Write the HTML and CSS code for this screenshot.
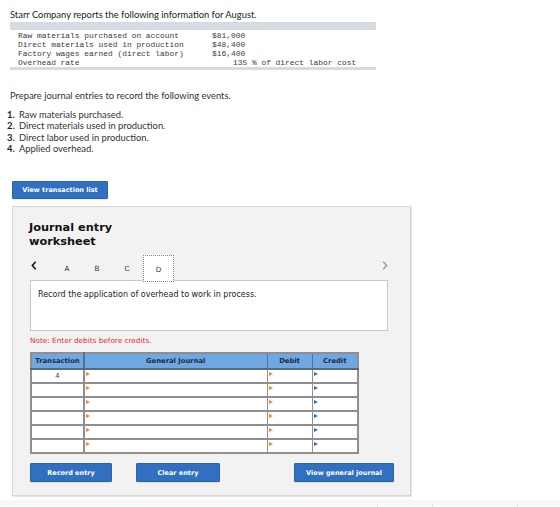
FILE: index.html
```html
<!DOCTYPE html>
<html lang="en">
<head>
<meta charset="utf-8">
<title>Journal entry worksheet</title>
<link rel="stylesheet" href="styles.css">
</head>
<body>
<div class="page">
  <p class="intro">Starr Company reports the following information for August.</p>
  <div class="info">
    <div class="info-bar"></div>
    <div class="info-row"><span class="info-label">Raw materials purchased on account</span><span class="info-value">$81,000</span></div>
    <div class="info-row"><span class="info-label">Direct materials used in production</span><span class="info-value">$48,400</span></div>
    <div class="info-row"><span class="info-label">Factory wages earned (direct labor)</span><span class="info-value">$16,400</span></div>
    <div class="info-row"><span class="info-label">Overhead rate</span><span class="info-value info-rate">135 % of direct labor cost</span></div>
    <div class="info-bar info-bar-bottom"></div>
  </div>

  <p class="prepare">Prepare journal entries to record the following events.</p>
  <ol class="events">
    <li><b>1.</b>Raw materials purchased.</li>
    <li><b>2.</b>Direct materials used in production.</li>
    <li><b>3.</b>Direct labor used in production.</li>
    <li><b>4.</b>Applied overhead.</li>
  </ol>

  <button class="btn btn-list" type="button">View transaction list</button>

  <section class="panel">
    <h2 class="panel-title">Journal entry<br>worksheet</h2>
    <div class="tabs">
      <span class="chev chev-left"><svg width="6" height="9" viewBox="0 0 6 9"><polyline points="4.6,0.8 1.4,4.5 4.6,8.2" fill="none" stroke="#1a1a1a" stroke-width="1.7"/></svg></span>
      <span class="tab">A</span>
      <span class="tab">B</span>
      <span class="tab">C</span>
      <span class="tab tab-active">D</span>
      <span class="chev chev-right"><svg width="6" height="9" viewBox="0 0 6 9"><polyline points="1.2,0.8 4.6,4.5 1.2,8.2" fill="none" stroke="#9a9a9a" stroke-width="1.4"/></svg></span>
    </div>
    <div class="desc">Record the application of overhead to work in process.</div>
    <p class="note">Note: Enter debits before credits.</p>

    <table class="journal">
      <colgroup>
        <col class="c-tr"><col class="c-gj"><col class="c-dr"><col class="c-cr">
      </colgroup>
      <thead>
        <tr><th class="c-tr">Transaction</th><th>General Journal</th><th>Debit</th><th>Credit</th></tr>
      </thead>
      <tbody>
        <tr><td class="c-tr">4</td><td><i class="mk mk-o"></i></td><td><i class="mk mk-o"></i></td><td><i class="mk mk-b"></i></td></tr>
        <tr><td class="c-tr"></td><td><i class="mk mk-o"></i></td><td><i class="mk mk-o"></i></td><td><i class="mk mk-b"></i></td></tr>
        <tr><td class="c-tr"></td><td><i class="mk mk-o"></i></td><td><i class="mk mk-o"></i></td><td><i class="mk mk-b"></i></td></tr>
        <tr><td class="c-tr"></td><td><i class="mk mk-o"></i></td><td><i class="mk mk-o"></i></td><td><i class="mk mk-b"></i></td></tr>
        <tr><td class="c-tr"></td><td><i class="mk mk-o"></i></td><td><i class="mk mk-o"></i></td><td><i class="mk mk-b"></i></td></tr>
        <tr><td class="c-tr"></td><td><i class="mk mk-o"></i></td><td><i class="mk mk-o"></i></td><td><i class="mk mk-b"></i></td></tr>
      </tbody>
    </table>

    <div class="actions">
      <button class="btn btn-record" type="button">Record entry</button>
      <button class="btn btn-clear" type="button">Clear entry</button>
      <button class="btn btn-view" type="button">View general journal</button>
    </div>
  </section>

  <div class="footer-band">
    <span class="fb-seg fb-1"></span>
    <span class="fb-seg fb-2"></span>
    <span class="fb-seg fb-3"></span>
  </div>
</div>
</body>
</html>
```

FILE: styles.css
```css
* { box-sizing: border-box; }

html, body {
  margin: 0;
  padding: 0;
  background: #fff;
  overflow: hidden;
}

body {
  font-family: Lato, "Open Sans", sans-serif;
  color: #333;
}

.page {
  width: 560px;
  height: 507px;
  padding: 9px 0 0 10px;
}

.intro {
  margin: 0;
  font-size: 9.4px;
  line-height: 12px;
  color: #222;
}

/* info table */
.info {
  margin-top: 1px;
  width: 366px;
  font-family: "Liberation Mono", "DejaVu Sans Mono", monospace;
  font-size: 7.9px;
  color: #3a3a3a;
}

.info-bar {
  height: 8px;
  background: #d5dae3;
  margin-bottom: 1px;
}

.info-bar-bottom {
  height: 3px;
  margin: 0;
}

.info-row {
  display: grid;
  grid-template-columns: 194px 1fr;
  height: 9px;
  line-height: 9px;
  padding-left: 8px;
}

.info-label { white-space: pre; }

.info-rate { padding-left: 21px; }

.prepare {
  margin: 20px 0 0;
  font-size: 9.4px;
  line-height: 12px;
  color: #333;
}

.events {
  list-style: none;
  margin: 7px 0 0 -3px;
  padding: 0;
  font-size: 9.4px;
  line-height: 11.3px;
  color: #333;
}

.events b {
  display: inline-block;
  width: 12px;
  font-weight: 700;
  color: #222;
}

/* buttons */
.btn {
  display: block;
  flex-shrink: 0;
  height: 19px;
  padding: 0;
  border: 1px solid #2a63ab;
  border-radius: 1px;
  background: #3170c0;
  color: #fff;
  font-family: "DejaVu Sans", Verdana, sans-serif;
  font-weight: 700;
  font-size: 6.5px;
  text-align: center;
  box-shadow: 0 1px 0 rgba(0,0,0,0.08);
}

.btn-list {
  margin: 27px 0 0 2px;
  width: 96px;
  height: 18px;
}

/* panel */
.panel {
  margin: 7px 0 0 2px;
  width: 399px;
  height: 290px;
  padding: 14px 22px 0 17px;
  background: #f2f2f2;
  border: 1px solid #d6d6d6;
  box-shadow: 1px 1px 0 #e4e4e4;
}

.panel-title {
  margin: 0 0 0 -1px;
  font-family: "DejaVu Sans", Verdana, sans-serif;
  font-weight: 700;
  font-size: 11.3px;
  line-height: 14px;
  color: #111;
}

.tabs {
  display: flex;
  align-items: stretch;
  height: 25px;
  margin-top: 6px;
  font-family: "DejaVu Sans", Verdana, sans-serif;
  font-size: 7.2px;
  color: #333;
}

.chev {
  display: flex;
  align-items: center;
  padding-bottom: 4px;
}

.chev-left {
  width: 22px;
  padding-left: 1px;
}

.chev-right {
  margin-left: auto;
  padding-bottom: 5px;
}

.tab {
  display: flex;
  align-items: center;
  justify-content: center;
  width: 30px;
  padding-top: 1px;
}

.tab-active {
  position: relative;
  z-index: 1;
  width: 31px;
  height: 27px;
  margin-left: 1px;
  background: #fff;
  border: 1px dotted #6d86ad;
}

.desc {
  height: 51px;
  padding: 9px 7px 0;
  background: #fff;
  border: 1px solid #c9c9c9;
  font-family: "DejaVu Sans", Verdana, sans-serif;
  font-size: 8px;
  line-height: 10px;
  color: #222;
}

.note {
  margin: 5px 0 0;
  font-family: "DejaVu Sans", Verdana, sans-serif;
  font-size: 7.3px;
  line-height: 10px;
  color: #d2342c;
}

/* journal table */
.journal {
  margin-top: 6px;
  width: 327px;
  border-collapse: collapse;
  table-layout: fixed;
  border: 2px solid #8f8f8f;
  font-family: "DejaVu Sans", Verdana, sans-serif;
  background: #fff;
}

.journal col.c-tr { width: 53px; }
.journal col.c-gj { width: 183px; }
.journal col.c-dr { width: 45px; }
.journal col.c-cr { width: 46px; }

.journal th {
  height: 16px;
  padding: 0;
  background: #6fa7e2;
  border: 1px solid #5c6f86;
  border-bottom: 2px solid #5a6a7c;
  font-size: 6.8px;
  font-weight: 700;
  color: #1c2b3f;
  text-align: center;
}

.journal td {
  height: 14px;
  padding: 0;
  border: 1px solid #8f8f8f;
  border-top-width: 2px;
  vertical-align: top;
  font-size: 6.8px;
  color: #444;
}

.journal tbody tr:first-child td { border-top-width: 0; }

.journal td.c-tr {
  text-align: center;
  vertical-align: middle;
  border-right-width: 2px;
}

.journal th.c-tr { border-right-width: 2px; }

.mk {
  display: block;
  width: 0;
  height: 0;
  margin: 2px 0 0 1px;
  border-top: 2px solid transparent;
  border-bottom: 2px solid transparent;
}

.mk-o { border-left: 4px solid #e8873a; }
.mk-b { border-left: 4px solid #2f6ec4; }

/* actions */
.actions {
  display: flex;
  margin-top: 9px;
}

.btn-record { width: 82px; }
.btn-clear { width: 84px; margin-left: 24px; }
.btn-view { width: 100px; margin-left: 74px; }

/* footer band */
.footer-band {
  position: relative;
  margin: 4px 0 0 -10px;
  width: 560px;
  height: 6px;
  background: #f7f7f7;
}

.fb-seg {
  position: absolute;
  top: 4px;
  width: 1px;
  height: 4px;
  background: #e6e6e6;
}

.fb-1 { left: 377px; }
.fb-2 { left: 432px; }
.fb-3 { left: 517px; }
```
